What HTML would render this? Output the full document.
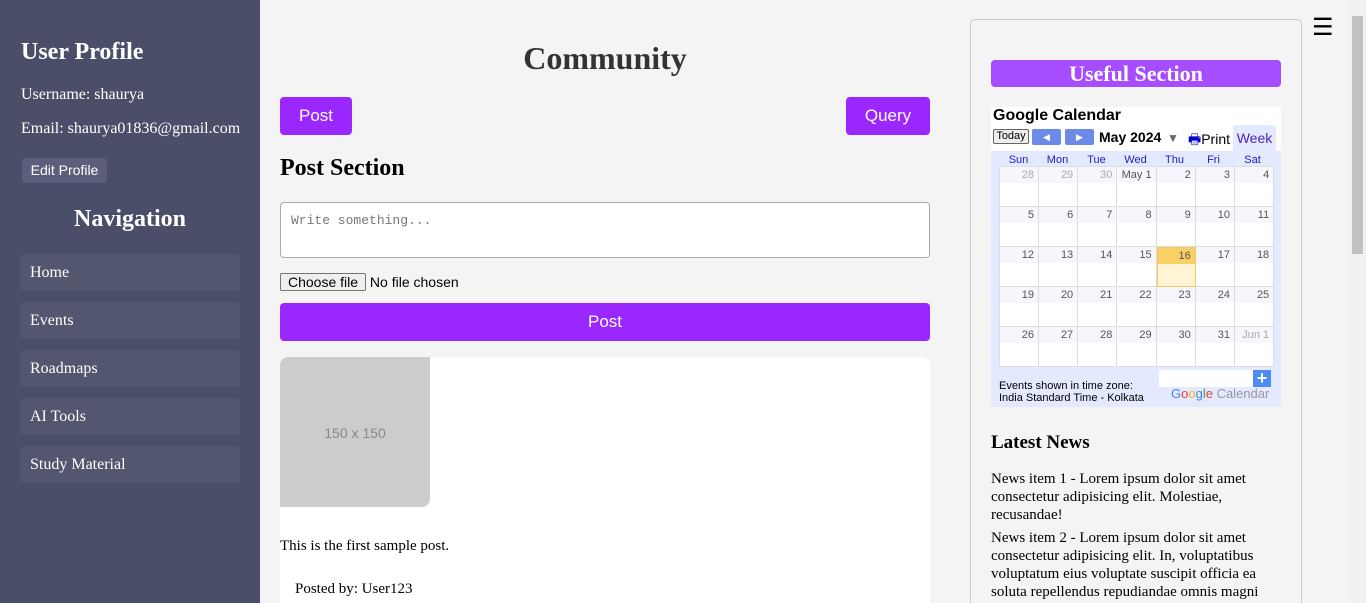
<!DOCTYPE html>
<html style="height:603px;overflow:hidden"><head><style>
*{box-sizing:border-box;margin:0;padding:0}
body{width:1366px;height:603px;overflow:hidden;background:#f4f4f4;font-family:"Liberation Serif",serif;position:relative}
.side{position:absolute;left:0;top:0;width:260px;height:603px;background:#4a4e69;color:#fff}
.side h2{position:absolute;left:21px;font-size:24px}
.side p{position:absolute;left:21px;font-size:16px}
.edit{position:absolute;left:22px;top:158px;width:85px;height:25px;background:#5c5f7b;border-radius:4px;font:14px "Liberation Sans",sans-serif;color:#fff;text-align:center;line-height:25px}
.ni{position:absolute;left:20px;width:220px;height:37px;background:#52566f;border-radius:5px;font-size:16px;line-height:37px;padding-left:10px;color:#fff}
.btn{position:absolute;background:#9b27ff;color:#fff;font:17px "Liberation Sans",sans-serif;text-align:center;border-radius:4px}
.sb{position:absolute;right:0;top:0;width:17px;height:603px;background:#f1f1f1}
.thumb{position:absolute;left:1352px;top:16px;width:11px;height:238px;background:#c1c1c1}
.right{position:absolute;left:970px;top:19px;width:332px;height:584px;border:1px solid #ccc;border-bottom:none;border-radius:5px 5px 0 0;background:#f4f4f4}
.cal{position:absolute;left:991px;top:107px;width:290px;height:300px;background:#e3e9ff;font-family:"Liberation Sans",sans-serif}
.cell{position:absolute;width:39px;height:40px;background:#fff;border-right:1px solid #ddd;border-bottom:1px solid #ddd}
.cell span{display:block;height:16px;background:#f5f7fd;text-align:right;padding-right:4px;font-size:11px;color:#555;line-height:16px}
</style></head><body>
<div class="side">
<h2 style="top:39px">User Profile</h2>
<p style="top:86px">Username: shaurya</p>
<p style="top:120px">Email: shaurya01836@gmail.com</p>
<div class="edit">Edit Profile</div>
<h2 style="left:0;width:260px;text-align:center;top:206px">Navigation</h2>
<div class="ni" style="top:254px">Home</div>
<div class="ni" style="top:302px">Events</div>
<div class="ni" style="top:350px">Roadmaps</div>
<div class="ni" style="top:398px">AI Tools</div>
<div class="ni" style="top:446px">Study Material</div>
</div>
<div style="position:absolute;left:280px;width:650px;top:40px;text-align:center;font-size:32px;font-weight:bold;color:#333">Community</div>
<div class="btn" style="left:280px;top:97px;width:72px;height:38px;line-height:38px">Post</div>
<div class="btn" style="left:846px;top:97px;width:84px;height:38px;line-height:38px">Query</div>
<div style="position:absolute;left:280px;top:155px;font-size:24px;font-weight:bold">Post Section</div>
<div style="position:absolute;left:280px;top:202px;width:650px;height:56px;background:#fff;border:1px solid #aaa;border-radius:4px;padding:10px 10px;font:13px 'Liberation Mono',monospace;color:#777">Write something...</div>
<div style="position:absolute;left:280px;top:273px;font:14px 'Liberation Sans',sans-serif"><span style="display:inline-block;border:1px solid #767676;background:#efefef;border-radius:2px;padding:0 7px">Choose file</span> No file chosen</div>
<div class="btn" style="left:280px;top:303px;width:650px;height:38px;line-height:38px">Post</div>
<div style="position:absolute;left:280px;top:357px;width:650px;height:246px;background:#fff;border-radius:8px 8px 0 0"></div>
<div style="position:absolute;left:280px;top:357px;width:150px;height:150px;background:#ccc;border-radius:8px 0 8px 0;color:#888;font:14px 'Liberation Sans',sans-serif;text-align:center;line-height:152px">150 x 150</div>
<div style="position:absolute;left:280px;top:538px;font-size:15px">This is the first sample post.</div>
<div style="position:absolute;left:295px;top:581px;font-size:15px">Posted by: User123</div>
<div class="right"></div>
<div style="position:absolute;left:991px;top:60px;width:290px;height:27px;background:#a64dff;border-radius:4px;color:#fff;font-size:22px;font-weight:bold;text-align:center;line-height:27px">Useful Section</div>
<div class="cal">
<div style="position:absolute;left:0;top:0;width:290px;height:44px;background:#fff"></div>
<div style="position:absolute;left:2px;top:0;font-size:16px;font-weight:bold">Google Calendar</div>
<div style="position:absolute;left:2px;top:22px;width:36px;height:15px;border:1px solid #666;border-radius:2px;background:#eee;font-size:11px;text-align:center;line-height:13px">Today</div>
<div style="position:absolute;left:41px;top:22px;width:29px;height:16px;background:#6b8be6;border-radius:2px;color:#fff;font-size:9px;text-align:center;line-height:16px">◀</div>
<div style="position:absolute;left:74px;top:22px;width:29px;height:16px;background:#6b8be6;border-radius:2px;color:#fff;font-size:9px;text-align:center;line-height:16px">▶</div>
<div style="position:absolute;left:108px;top:22px;font-size:14px;font-weight:bold">May 2024</div>
<div style="position:absolute;left:176px;top:24px;font-size:12px;color:#666">▼</div>
<div style="position:absolute;left:197px;top:22px;font-size:14px"><span style="color:#00c">🖶</span>Print</div>
<div style="position:absolute;left:242px;top:18px;width:43px;height:26px;background:#e3e9ff;border-radius:3px 3px 0 0;color:#4a24b8;font-size:14px;text-align:center;line-height:26px">Week</div>
<div style="position:absolute;left:8px;top:47px;width:274px;font-size:11px;color:#2020c0;display:flex">
<span style="width:39px;text-align:center">Sun</span><span style="width:39px;text-align:center">Mon</span><span style="width:39px;text-align:center">Tue</span><span style="width:39px;text-align:center">Wed</span><span style="width:39px;text-align:center">Thu</span><span style="width:39px;text-align:center">Fri</span><span style="width:39px;text-align:center">Sat</span></div>
<div id="g" style="position:absolute;left:8px;top:59px;width:274px;height:200px;background:#fff;border-left:1px solid #ddd;border-top:1px solid #ddd"></div>
<div style="position:absolute;left:8px;top:273px;font-size:11px;line-height:12px">Events shown in time zone:<br>India Standard Time - Kolkata</div>
<div style="position:absolute;left:168px;top:263px;width:100px;height:17px;background:#fff"></div>
<div style="position:absolute;left:262px;top:263px;width:18px;height:17px;background:#4d8cf5;color:#fff;font-size:18px;line-height:16px;text-align:center;font-weight:bold">+</div>
<div style="position:absolute;left:180px;top:279px;font-size:13px;color:#999"><span style="color:#4285f4">G</span><span style="color:#ea4335">o</span><span style="color:#fbbc05">o</span><span style="color:#4285f4">g</span><span style="color:#34a853">l</span><span style="color:#ea4335">e</span> Calendar</div>
</div>
<script>
var d=["28","29","30","May 1","2","3","4"];for(var i=5;i<=31;i++)d.push(""+i);d.push("Jun 1");
var h="";d.forEach(function(t,k){var r=Math.floor(k/7),c=k%7;var gray=(k<3||k==34);var today=t=="16";
h+='<div class="cell" style="left:'+(c*39.2)+'px;top:'+(r*40)+'px;'+(today?'background:#fff4d4;border:1px solid #f5c95c':'')+'"><span style="'+(gray?'color:#aaa;':'')+(today?'background:#f9d063;':'')+'">'+t+'</span></div>'});
document.getElementById('g').innerHTML=h;
</script>
<div style="position:absolute;left:991px;top:432px;font-size:19px;font-weight:bold">Latest News</div>
<div style="position:absolute;left:991px;top:470px;width:290px;font-size:15px;line-height:18px;height:133px;overflow:hidden">
<p style="margin-bottom:5px">News item 1 - Lorem ipsum dolor sit amet consectetur adipisicing elit. Molestiae, recusandae!</p>
<p>News item 2 - Lorem ipsum dolor sit amet consectetur adipisicing elit. In, voluptatibus voluptatum eius voluptate suscipit officia ea soluta repellendus repudiandae omnis magni</p></div>
<div style="position:absolute;left:1312px;top:16px;font-size:24px;line-height:24px">☰</div>
<div class="sb"></div><div class="thumb"></div>
</body></html>
